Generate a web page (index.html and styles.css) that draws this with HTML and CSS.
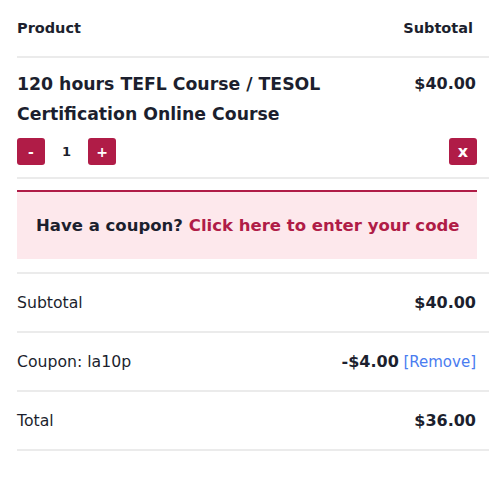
FILE: index.html
```html
<!DOCTYPE html>
<html>
<head>
<meta charset="utf-8">
<link rel="stylesheet" href="styles.css">
</head>
<body>
<div class="cart">
  <div class="row head">
    <span class="h">Product</span>
    <span class="h hright">Subtotal</span>
  </div>
  <div class="item">
    <div class="item-top">
      <div class="title">120 hours TEFL Course / TESOL Certification Online Course</div>
      <div class="price right">$40.00</div>
    </div>
    <div class="item-ctrl">
      <div class="qty">
        <span class="btn">-</span>
        <span class="num">1</span>
        <span class="btn">+</span>
      </div>
      <span class="btn x right-btn">x</span>
    </div>
  </div>
  <div class="coupon-wrap">
    <div class="coupon">Have a coupon? <span class="link">Click here to enter your code</span></div>
  </div>
  <div class="row tot">
    <span class="label">Subtotal</span>
    <span class="val right">$40.00</span>
  </div>
  <div class="row tot">
    <span class="label">Coupon: la10p</span>
    <span class="val right">-$4.00 <span class="remove">[Remove]</span></span>
  </div>
  <div class="row tot">
    <span class="label">Total</span>
    <span class="val right">$36.00</span>
  </div>
</div>
</body>
</html>
```
FILE: styles.css
```css
html, body { margin: 0; padding: 0; background: #fff; }
body { font-family: "DejaVu Sans", "Noto Sans", sans-serif; color: #1c1f2e; }
.cart { margin-left: 17px; width: 472px; }
.row { display: flex; justify-content: space-between; align-items: center; border-bottom: 2px solid #ebebeb; }
.head { height: 56px; }
.h { font-size: 14.5px; font-weight: 700; }
.hright { padding-right: 16px; }
.right { padding-right: 13px; }
.item { border-bottom: 2px solid #ebebeb; padding: 11px 0 12px; }
.item-top { display: flex; justify-content: space-between; align-items: flex-start; }
.title { font-size: 17.3px; font-weight: 700; line-height: 30px; width: 340px; }
.price { font-size: 16px; font-weight: 700; line-height: 30px; }
.item-ctrl { display: flex; justify-content: space-between; align-items: center; margin-top: 9px; }
.qty { display: flex; align-items: center; }
.btn { display: flex; align-items: center; justify-content: center; width: 28px; height: 27px; border-radius: 3px; background: #b01c47; color: #fff; font-size: 14px; font-weight: 700; }
.num { width: 43px; text-align: center; font-size: 13px; font-weight: 700; }
.right-btn { margin-right: 12px; font-size: 16px; }
.coupon-wrap { padding: 11px 0 13px; border-bottom: 2px solid #ebebeb; }
.coupon { width: 460px; box-sizing: border-box; border-top: 2px solid #b01c47; background: #fde8ec; height: 69px; display: flex; align-items: center; padding-left: 19px; font-size: 16.5px; font-weight: 700; white-space: nowrap; }
.coupon .link { color: #b01c47; margin-left: 6px; }
.tot { height: 57px; }
.label { font-size: 15.7px; }
.val { font-size: 16px; font-weight: 700; }
.remove { font-size: 15px; font-weight: 400; color: #4a7cf0; margin-left: -1px; }
```
